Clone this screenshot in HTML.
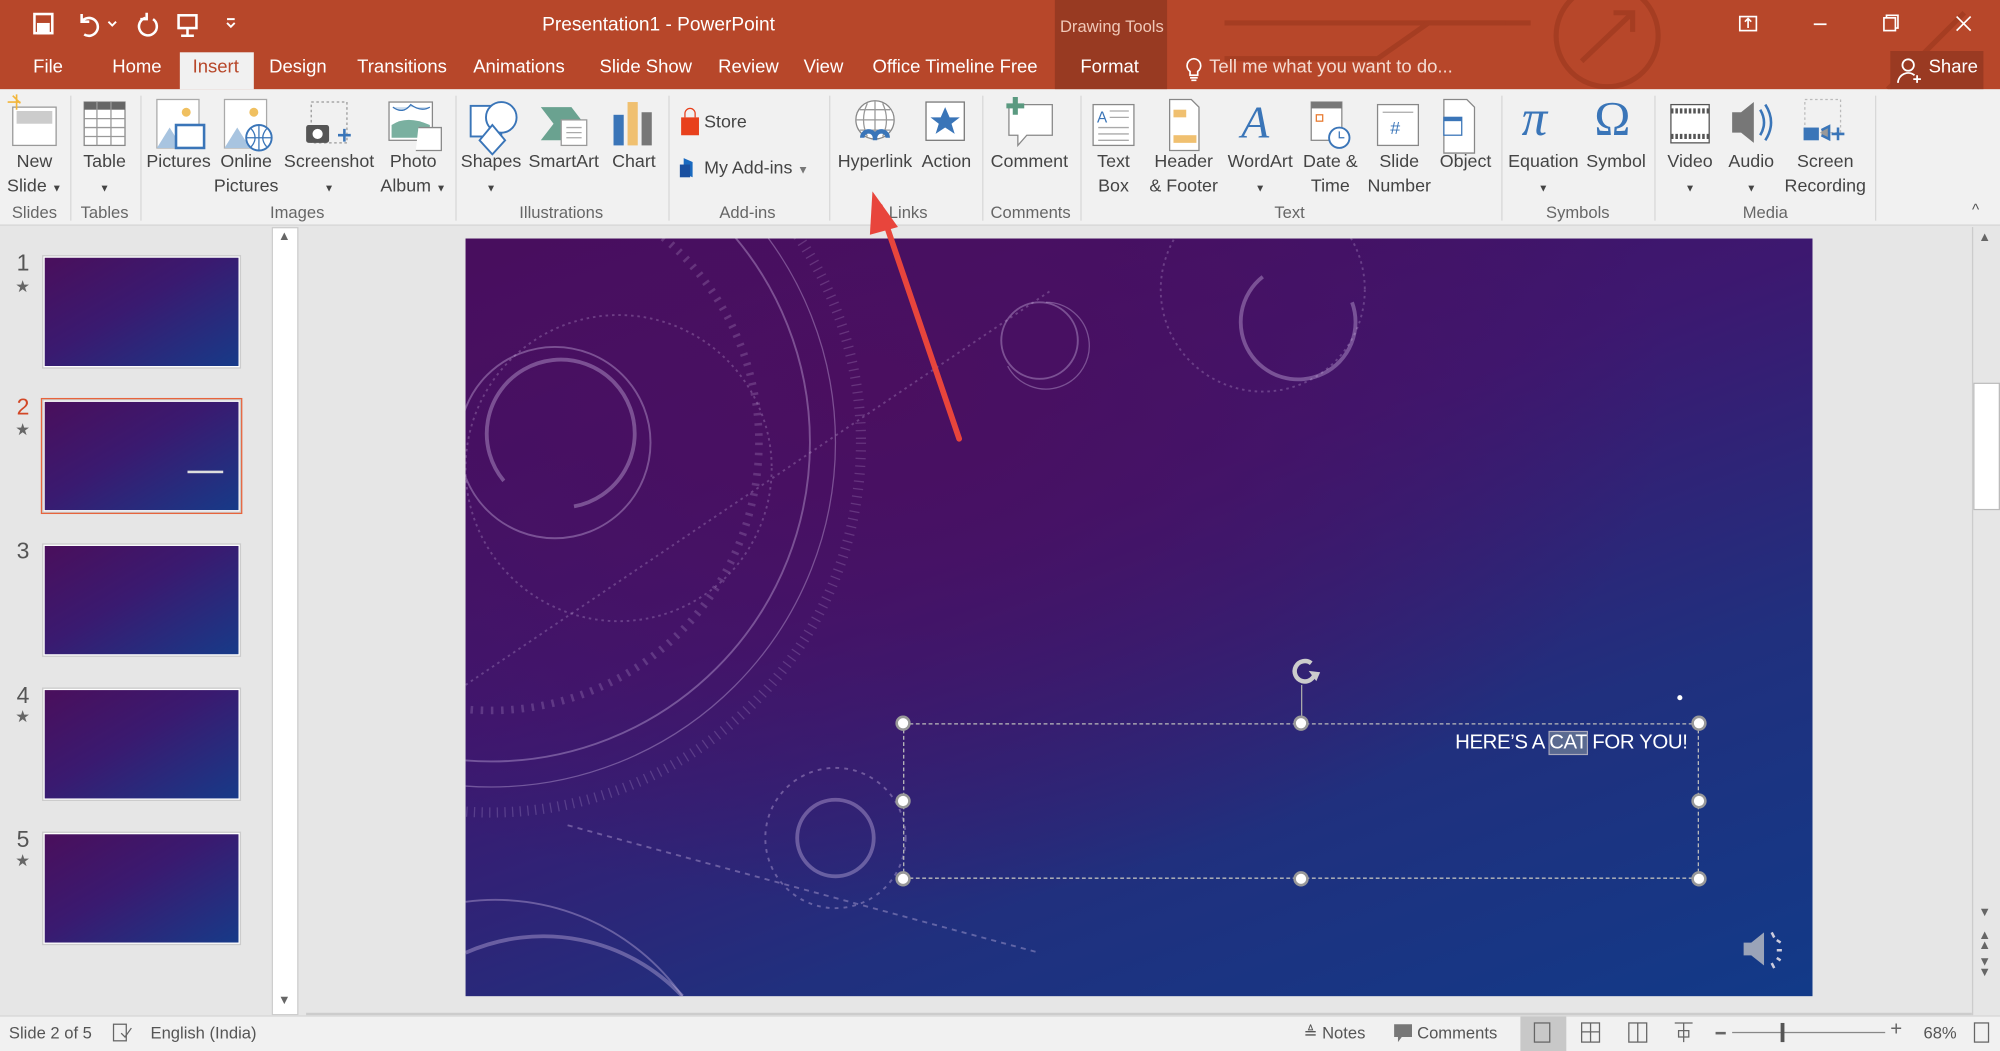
<!DOCTYPE html>
<html><head><meta charset="utf-8"><style>
*{margin:0;padding:0;box-sizing:border-box}
html,body{width:2000px;height:1051px;overflow:hidden;background:#e6e6e6}
#w{position:absolute;left:0;top:0;width:1568px;height:824px;transform:scale(1.27551);transform-origin:0 0;font-family:"Liberation Sans",sans-serif;font-size:14px;color:#444}
.a{position:absolute}
.t{position:absolute;white-space:nowrap}
.c{transform:translateX(-50%);text-align:center;line-height:19px}
.tab{position:absolute;top:45px;color:#fff;font-size:14.5px;white-space:nowrap}
.g{position:absolute;top:159px;color:#666;font-size:13px;transform:translateX(-50%);white-space:nowrap}
.sep{position:absolute;top:75px;width:1px;height:98px;background:#d8d8d8}
.th{position:absolute;left:34px;width:154px;height:87px;background:linear-gradient(150deg,#4a0f5c,#3a1a70 45%,#173a88);border:1px solid #fff;outline:1px solid #ccc}
.num{position:absolute;left:13px;font-size:18px;color:#555}
.star{position:absolute;left:12px;font-size:13px;color:#666}
.h{position:absolute;width:12px;height:12px;border-radius:50%;background:#fff;border:2px solid #999;transform:translate(-50%,-50%)}
</style></head><body><div id="w">
<div class="a" style="left:0;top:0;width:1568px;height:70px;background:#b7472a"></div>
<svg class="a" style="left:940px;top:0" width="620" height="70"><g stroke="#a53d22" stroke-width="4" fill="none"><line x1="20" y1="18" x2="260" y2="18"/><circle cx="320" cy="28" r="40"/><path d="M300 48 L340 10 M325 10h15v15"/><path d="M20 46h120l40 -28h60"/><path d="M540 70l60-60"/></g></svg>
<div class="a" style="left:827px;top:0;width:88px;height:70px;background:#983a22"></div>
<div class="t" style="left:831px;top:13px;color:#f0c8b8;font-size:13px">Drawing Tools</div>
<div class="t" style="left:425px;top:11px;color:#fff;font-size:15px">Presentation1 - PowerPoint</div>
<svg class="a" style="left:24px;top:8px" width="170" height="22" fill="none" stroke="#fff" stroke-width="2"><rect x="3" y="3" width="14" height="15"/><rect x="6" y="11" width="8" height="7" fill="#fff"/><path d="M40 9a7 7 0 1 1 2 10M40 3v6h6"/><path d="M61 9l3 3 3-3" stroke-width="1.5"/><path d="M90 6a7 7 0 1 0 6 1M91 2v5h-5"/><rect x="116" y="4" width="14" height="10"/><path d="M123 14v6M118 20h10"/><path d="M154 10l3 3 3-3M154 7h6" stroke-width="1.5"/></svg>
<svg class="a" style="left:1360px;top:8px" width="200" height="22" fill="none" stroke="#fff" stroke-width="1.3"><rect x="4" y="5" width="13" height="11"/><path d="M10.5 14v-7M8 9l2.5-2.5L13 9"/><path d="M62 11h10"/><rect x="117" y="6" width="9" height="10"/><path d="M119 6v-2h9v10h-2"/><path d="M174 5l11 11M185 5l-11 11"/></svg>
<div class="a" style="left:141px;top:41px;width:58px;height:29px;background:#f1f1f1"></div>
<div class="tab" style="left:26px">File</div>
<div class="tab" style="left:88px">Home</div>
<div class="tab" style="left:151px;color:#b7472a">Insert</div>
<div class="tab" style="left:211px">Design</div>
<div class="tab" style="left:280px">Transitions</div>
<div class="tab" style="left:371px">Animations</div>
<div class="tab" style="left:470px">Slide Show</div>
<div class="tab" style="left:563px">Review</div>
<div class="tab" style="left:630px">View</div>
<div class="tab" style="left:684px">Office Timeline Free</div>
<div class="tab" style="left:847px">Format</div>
<svg class="a" style="left:929px;top:45px" width="14" height="20" fill="none" stroke="#fff" stroke-width="1.3"><path d="M7 1a5.5 5.5 0 0 0-3 10v3h6v-3a5.5 5.5 0 0 0-3-10zM4 16h6M5 18h4"/></svg>
<div class="tab" style="left:948px;color:#f4dcd2">Tell me what you want to do...</div>
<div class="a" style="left:1482px;top:40px;width:73px;height:30px;background:#9a3a22"></div>
<svg class="a" style="left:1487px;top:45px" width="20" height="22" fill="none" stroke="#fff" stroke-width="1.4"><circle cx="9" cy="6" r="4.5"/><path d="M1 20a8 8 0 0 1 13-6M13 17h6M16 14v6"/></svg>
<div class="tab" style="left:1512px">Share</div>
<div class="a" style="left:0;top:70px;width:1568px;height:107px;background:#f1f1f1;border-bottom:1px solid #d5d5d5"></div>
<svg class="a" style="left:0;top:72px" width="1568" height="50">
<rect x="10" y="12" width="34" height="30" fill="#fff" stroke="#999"/><rect x="13" y="15" width="28" height="10" fill="#ccc"/><path d="M10 3l6 6M6 8h10M13 2v12" stroke="#f2b63b" stroke-width="1.3"/>
<rect x="66" y="8" width="32" height="34" fill="#fff" stroke="#888"/><rect x="66" y="8" width="32" height="6" fill="#666"/><path d="M66 21h32M66 28h32M66 35h32M76 8v34M87 8v34" stroke="#999"/>
<rect x="123" y="6" width="33" height="38" fill="#fff" stroke="#aaa"/><circle cx="146" cy="16" r="3.5" fill="#f0c060"/><path d="M123 44l10-16 10 16z" fill="#a8c4e0"/><rect x="138" y="26" width="22" height="18" fill="#fff" stroke="#3a75b8" stroke-width="2"/>
<rect x="176" y="6" width="33" height="38" fill="#fff" stroke="#aaa"/><circle cx="199" cy="16" r="3.5" fill="#f0c060"/><path d="M176 44l10-16 10 16z" fill="#a8c4e0"/><circle cx="203" cy="36" r="10" fill="#fff" stroke="#3a75b8" stroke-width="1.5"/><path d="M193 36h20M203 26v20M197 29q6 7 0 14M209 29q-6 7 0 14" stroke="#3a75b8" fill="none"/>
<rect x="244" y="8" width="28" height="32" fill="none" stroke="#999" stroke-dasharray="2 2"/><rect x="240" y="26" width="18" height="14" rx="2" fill="#555"/><circle cx="249" cy="33" r="4" fill="#fff"/><path d="M265 34h10M270 29v10" stroke="#3a75b8" stroke-width="2"/>
<rect x="305" y="8" width="34" height="30" fill="#fff" stroke="#888"/><path d="M307 26q12-8 30 0v10h-30z" fill="#7ab0a0"/><path d="M308 12q8 6 14-2q8 6 15 2" stroke="#3a75b8" fill="#cde" /><path d="M328 28h18v18h-20" fill="#fff" stroke="#888"/>
<rect x="369" y="11" width="24" height="24" fill="#fff" stroke="#3a75b8" stroke-width="1.5"/><circle cx="393" cy="20" r="12" fill="#fff" stroke="#3a75b8" stroke-width="1.5"/><path d="M386 26l10 12-10 11-10-11z" fill="#fff" stroke="#3a75b8" stroke-width="1.5"/>
<path d="M424 12h24l10 13-10 13h-24l10-13z" fill="#6aa290"/><rect x="440" y="22" width="20" height="20" fill="#fff" stroke="#999"/><path d="M444 28h12M444 32h12M444 36h12" stroke="#aaa"/>
<rect x="481" y="18" width="8" height="24" fill="#3a75b8"/><rect x="492" y="8" width="8" height="34" fill="#f0c070"/><rect x="503" y="16" width="8" height="26" fill="#777"/>
<path d="M534 20h14v14h-14z" fill="#e8401c"/><path d="M537 20v-3a4 4 0 0 1 8 0v3" stroke="#e8401c" fill="none"/>
<circle cx="686" cy="22" r="15" fill="#fff" stroke="#888"/><path d="M671 22h30M686 7v30M680 9q-6 13 0 26M692 9q6 13 0 26M674 14h24M674 30h24" stroke="#999" fill="none"/><path d="M676 36a5 5 0 0 1 10 0v2M686 36a5 5 0 0 1 10 0" stroke="#3a75b8" stroke-width="3.5" fill="none"/>
<rect x="726" y="8" width="30" height="30" fill="#fff" stroke="#777"/><path d="M741 12l3.5 8h8l-6.5 5 2.5 8-7.5-5-7.5 5 2.5-8-6.5-5h8z" fill="#3a75b8"/>
<path d="M791 10h34v24h-20l-7 8v-8h-7z" fill="#fff" stroke="#888"/><path d="M796 4v14M789 11h14" stroke="#5a9a80" stroke-width="4"/>
<rect x="857" y="10" width="32" height="32" fill="#fff" stroke="#888"/><text x="860" y="24" font-size="12" fill="#3a75b8" font-family="Liberation Sans">A</text><path d="M870 15h15M870 20h15M861 28h24M861 33h24M861 38h24" stroke="#aaa"/>
<path d="M917 6h17l6 6v34h-23z" fill="#fff" stroke="#888"/><rect x="920" y="14" width="10" height="6" fill="#f0c070"/><rect x="920" y="34" width="18" height="6" fill="#f0c070"/>
<text x="973" y="36" font-size="36" font-style="italic" fill="#3a75b8" font-family="Liberation Serif">A</text>
<rect x="1028" y="8" width="24" height="30" fill="#fff" stroke="#888"/><rect x="1028" y="8" width="24" height="5" fill="#777"/><rect x="1032" y="18" width="5" height="5" fill="none" stroke="#e87a30"/><circle cx="1050" cy="36" r="8" fill="#fff" stroke="#3a75b8" stroke-width="1.5"/><path d="M1050 31v5h4" stroke="#3a75b8" fill="none"/>
<rect x="1080" y="10" width="32" height="32" fill="#fff" stroke="#888"/><text x="1090" y="33" font-size="14" fill="#3a75b8" font-family="Liberation Sans">#</text><path d="M1084 16h24" stroke="#aaa"/>
<path d="M1132 6h18l6 6v36h-24z" fill="#fff" stroke="#888"/><rect x="1132" y="20" width="14" height="14" fill="#fff" stroke="#3a75b8"/><rect x="1132" y="20" width="14" height="3" fill="#3a75b8"/>
<text x="1193" y="34" font-size="40" fill="#3a75b8" font-family="Liberation Serif" font-style="italic">π</text>
<text x="1250" y="34" font-size="38" fill="#3a75b8" font-family="Liberation Serif">Ω</text>
<rect x="1310" y="10" width="30" height="30" fill="#fff" stroke="#555"/><path d="M1310 15h30M1310 35h30" stroke="#555" stroke-dasharray="2 1.5" stroke-width="4"/>
<path d="M1358 16h7l10-8v32l-10-8h-7z" fill="#777"/><path d="M1380 14q6 10 0 20M1384 10q9 14 0 28" stroke="#3a75b8" stroke-width="2" fill="none"/>
<rect x="1415" y="6" width="28" height="26" fill="none" stroke="#bbb" stroke-dasharray="2 2"/><rect x="1414" y="28" width="12" height="10" fill="#3a75b8"/><path d="M1428 30l6-3v10l-6-3M1436 33h10M1441 28v10" stroke="#3a75b8" stroke-width="2" fill="#999"/>
</svg>
<svg class="a" style="left:530px;top:120px" width="20" height="22"><path d="M6 4l7 3v12l-7-3z" fill="#1a6ac0"/><rect x="3" y="9" width="8" height="10" fill="#1a50a0"/></svg>
<div class="t" style="left:552px;top:87px">Store</div>
<div class="t" style="left:552px;top:123px">My Add-ins <span style="font-size:9px;color:#777">▼</span></div>
<div class="t c" style="left:27px;top:117px">New<br>Slide <span style="font-size:8px">▼</span></div>
<div class="t c" style="left:82px;top:117px">Table<br><span style="font-size:8px">▼</span></div>
<div class="t c" style="left:140px;top:117px">Pictures</div>
<div class="t c" style="left:193px;top:117px">Online<br>Pictures</div>
<div class="t c" style="left:258px;top:117px">Screenshot<br><span style="font-size:8px">▼</span></div>
<div class="t c" style="left:324px;top:117px">Photo<br>Album <span style="font-size:8px">▼</span></div>
<div class="t c" style="left:385px;top:117px">Shapes<br><span style="font-size:8px">▼</span></div>
<div class="t c" style="left:442px;top:117px">SmartArt</div>
<div class="t c" style="left:497px;top:117px">Chart</div>
<div class="t c" style="left:686px;top:117px">Hyperlink</div>
<div class="t c" style="left:742px;top:117px">Action</div>
<div class="t c" style="left:807px;top:117px">Comment</div>
<div class="t c" style="left:873px;top:117px">Text<br>Box</div>
<div class="t c" style="left:928px;top:117px">Header<br>&amp; Footer</div>
<div class="t c" style="left:988px;top:117px">WordArt<br><span style="font-size:8px">▼</span></div>
<div class="t c" style="left:1043px;top:117px">Date &amp;<br>Time</div>
<div class="t c" style="left:1097px;top:117px">Slide<br>Number</div>
<div class="t c" style="left:1149px;top:117px">Object</div>
<div class="t c" style="left:1210px;top:117px">Equation<br><span style="font-size:8px">▼</span></div>
<div class="t c" style="left:1267px;top:117px">Symbol</div>
<div class="t c" style="left:1325px;top:117px">Video<br><span style="font-size:8px">▼</span></div>
<div class="t c" style="left:1373px;top:117px">Audio<br><span style="font-size:8px">▼</span></div>
<div class="t c" style="left:1431px;top:117px">Screen<br>Recording</div>
<div class="g" style="left:27px">Slides</div><div class="g" style="left:82px">Tables</div><div class="g" style="left:233px">Images</div><div class="g" style="left:440px">Illustrations</div><div class="g" style="left:586px">Add-ins</div><div class="g" style="left:712px">Links</div><div class="g" style="left:808px">Comments</div><div class="g" style="left:1011px">Text</div><div class="g" style="left:1237px">Symbols</div><div class="g" style="left:1384px">Media</div>
<div class="sep" style="left:55px"></div><div class="sep" style="left:110px"></div><div class="sep" style="left:357px"></div><div class="sep" style="left:524px"></div><div class="sep" style="left:650px"></div><div class="sep" style="left:770px"></div><div class="sep" style="left:847px"></div><div class="sep" style="left:1177px"></div><div class="sep" style="left:1297px"></div><div class="sep" style="left:1470px"></div>
<div class="t" style="left:1546px;top:157px;font-size:12px;color:#555">^</div>
<div class="num" style="top:196px">1</div><div class="star" style="top:217px">★</div>
<div class="th" style="top:201px"></div>
<div class="a" style="left:32px;top:312px;width:158px;height:91px;border:2px solid #e8643c"></div>
<div class="num" style="top:309px;color:#d24726">2</div><div class="star" style="top:329px">★</div>
<div class="th" style="top:314px"><div class="a" style="left:112px;top:54px;width:28px;height:2px;background:#ddd"></div></div>
<div class="num" style="top:422px">3</div>
<div class="th" style="top:427px"></div>
<div class="num" style="top:535px">4</div><div class="star" style="top:554px">★</div>
<div class="th" style="top:540px"></div>
<div class="num" style="top:648px">5</div><div class="star" style="top:667px">★</div>
<div class="th" style="top:653px"></div>
<div class="a" style="left:213px;top:178px;width:21px;height:618px;background:#fff;border:1px solid #ccc"></div>
<div class="t" style="left:218px;top:180px;font-size:10px;color:#666">▲</div>
<div class="t" style="left:218px;top:779px;font-size:10px;color:#666">▼</div>
<div class="a" style="left:1546px;top:178px;width:22px;height:618px;background:#e6e6e6;border-left:1px solid #ccc"></div>
<div class="a" style="left:1547px;top:300px;width:21px;height:100px;background:#fff;border:1px solid #bbb"></div>
<div class="t" style="left:1551px;top:181px;font-size:10px;color:#666">▲</div>
<div class="t" style="left:1551px;top:710px;font-size:10px;color:#666">▼</div>
<div class="t" style="left:1551px;top:730px;font-size:10px;color:#666;line-height:8px">▲<br>▲</div>
<div class="t" style="left:1551px;top:751px;font-size:10px;color:#666;line-height:8px">▼<br>▼</div>
<div class="a" style="left:240px;top:794px;width:1306px;height:2px;background:#ccc"></div>
<div class="a" style="left:365px;top:187px;width:1056px;height:594px;overflow:hidden;background:radial-gradient(ellipse at 30% 20%,#4a0f60 0%,transparent 60%),linear-gradient(160deg,#470d5c 0%,#3d1870 40%,#20307e 70%,#123a88 100%)">
<svg width="1056" height="594" style="position:absolute;left:0;top:0" fill="none" stroke="rgba(220,200,240,0.35)" stroke-width="1.5">
<circle cx="20" cy="160" r="250"/><circle cx="20" cy="160" r="270" stroke-width="1"/>
<circle cx="20" cy="160" r="290" stroke-dasharray="1 5" stroke-width="8" stroke="rgba(220,200,240,0.2)"/>
<circle cx="20" cy="160" r="210" stroke-dasharray="2 6" stroke-width="6" stroke="rgba(220,200,240,0.2)"/>
<circle cx="70" cy="160" r="75"/><path d="M30 190 A58 58 0 1 1 85 210" stroke-width="3"/>
<circle cx="120" cy="180" r="120" stroke-dasharray="2 3" stroke="rgba(220,200,240,0.25)"/>
<circle cx="450" cy="80" r="30" /><path d="M455 50a34 34 0 1 1 -30 50" stroke-width="1"/>
<path d="M625 30a45 45 0 1 0 70 20" stroke-width="3"/><circle cx="625" cy="40" r="80" stroke-dasharray="2 3" stroke="rgba(220,200,240,0.25)"/>
<circle cx="290" cy="470" r="30" stroke-width="3"/><circle cx="290" cy="470" r="55" stroke-dasharray="3 4"/>
<path d="M0 560 A150 150 0 0 1 170 594" stroke-width="3"/><path d="M0 520 A180 180 0 0 1 170 594"/>
<path d="M0 350 L460 40" stroke-dasharray="2 3" stroke="rgba(220,200,240,0.25)"/>
<path d="M80 460 Q300 520 450 560" stroke-dasharray="4 4"/>
</svg>
<div class="t" style="left:0;top:387px;width:958px;text-align:right;color:#fff;font-size:16px;letter-spacing:-0.3px">HERE’S A <span style="background:#5a6a90;outline:1px solid #aab">CAT</span> FOR YOU!</div>
<div class="a" style="left:950px;top:358px;width:4px;height:4px;border-radius:50%;background:#fff"></div>
<svg class="a" style="left:998px;top:538px" width="40" height="40"><path d="M4 14h6l10-8v26l-10-8h-6z" fill="#9aa3b8"/><path d="M26 6l2 4M30 12l3 2M30 20h4M30 26l3 2M26 30l2 4" stroke="#ccd" stroke-width="2"/></svg>
</div>
<div class="a" style="left:708px;top:567px;width:624px;height:122px;border:1px dashed #bbb"></div>
<div class="a" style="left:1020px;top:537px;width:1px;height:30px;background:#aaa"></div>
<svg class="a" style="left:1008px;top:513px" width="32" height="26"><path d="M20 7a8 8 0 1 0 3 7" stroke="#ccc" stroke-width="3.5" fill="none"/><path d="M18 13l9 1-3 7z" fill="#ccc"/></svg>
<div class="h" style="left:708px;top:567px"></div><div class="h" style="left:1020px;top:567px"></div><div class="h" style="left:1332px;top:567px"></div>
<div class="h" style="left:708px;top:628px"></div><div class="h" style="left:1332px;top:628px"></div>
<div class="h" style="left:708px;top:689px"></div><div class="h" style="left:1020px;top:689px"></div><div class="h" style="left:1332px;top:689px"></div>
<svg class="a" style="left:660px;top:140px" width="110" height="220"><line x1="92" y1="204" x2="30" y2="22" stroke="#e8453c" stroke-width="4.5" stroke-linecap="round"/><path d="M24 10l20 28-22 6z" fill="#e8453c"/></svg>
<div class="a" style="left:0;top:796px;width:1568px;height:28px;background:#f1f1f1;border-top:1px solid #d5d5d5"></div>
<div class="t" style="left:7px;top:802px;font-size:13px;color:#555">Slide 2 of 5</div>
<svg class="a" style="left:87px;top:801px" width="18" height="18" fill="none" stroke="#666"><rect x="2" y="2" width="10" height="13"/><path d="M8 9l3 3 5-7"/></svg>
<div class="t" style="left:118px;top:802px;font-size:13px;color:#555">English (India)</div>
<div class="t" style="left:1022px;top:802px;font-size:13px;color:#555">≜ Notes</div>
<svg class="a" style="left:1092px;top:802px" width="16" height="16"><path d="M1 1h14v10h-8l-3 4v-4h-3z" fill="#777"/></svg>
<div class="t" style="left:1111px;top:802px;font-size:13px;color:#555">Comments</div>
<div class="a" style="left:1192px;top:797px;width:36px;height:27px;background:#c8c8c8"></div>
<svg class="a" style="left:1200px;top:800px" width="140" height="20" fill="none" stroke="#666"><rect x="3" y="2" width="12" height="15"/><rect x="40" y="2" width="14" height="15"/><path d="M40 9h14M47 2v15"/><rect x="77" y="2" width="14" height="15"/><path d="M84 2v15"/><path d="M113 2h14M120 2v15M116 8h8v5h-8z"/></svg>
<div class="a" style="left:1345px;top:809px;width:8px;height:2px;background:#666"></div>
<div class="a" style="left:1358px;top:809px;width:120px;height:1px;background:#888"></div>
<div class="a" style="left:1396px;top:802px;width:3px;height:15px;background:#555"></div>
<div class="t" style="left:1482px;top:799px;font-size:16px;color:#666">+</div>
<div class="t" style="left:1508px;top:802px;font-size:13px;color:#555">68%</div>
<svg class="a" style="left:1547px;top:801px" width="14" height="18" fill="none" stroke="#666"><rect x="1" y="1" width="11" height="15"/></svg>
</div></body></html>
